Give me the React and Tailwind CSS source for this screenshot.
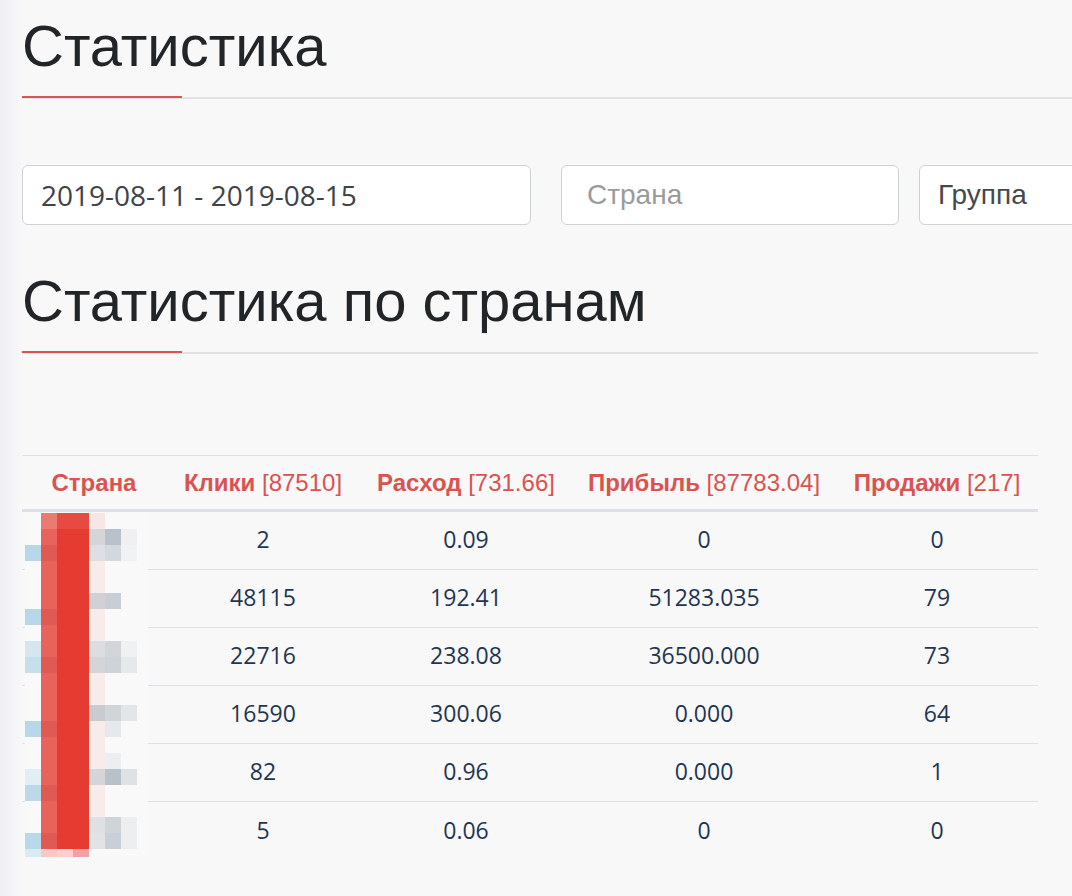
import React from 'react';

const headFont = { fontFamily: '"Liberation Sans", Arial, sans-serif' };

const columns = [
  { name: 'Страна', total: null },
  { name: 'Клики', total: '87510' },
  { name: 'Расход', total: '731.66' },
  { name: 'Прибыль', total: '87783.04' },
  { name: 'Продажи', total: '217' },
];

const rows = [
  ['2', '0.09', '0', '0'],
  ['48115', '192.41', '51283.035', '79'],
  ['22716', '238.08', '36500.000', '73'],
  ['16590', '300.06', '0.000', '64'],
  ['82', '0.96', '0.000', '1'],
  ['5', '0.06', '0', '0'],
];

// pixelated (redacted) country column, 16px blocks
const W = '#f9f9fa';
const P = '#f8eceb';
const R1 = '#e8635b';
const R2 = '#e53b30';
const mosaic = [
  [W, '#ea7a72', '#e64a40', '#e64a40', '#f8e6e5', W, W, W],
  [W, R1, R2, R2, '#d3d5d9', '#b9c1ca', '#eef0f2', W],
  ['#b7d8ea', '#e05a52', R2, R2, '#dedfe2', '#d3d8dd', '#f1f2f4', W],
  [W, R1, R2, R2, P, W, W, W],
  [W, R1, R2, R2, P, W, W, W],
  [W, R1, R2, R2, '#cfd1d6', '#c8ced5', W, W],
  ['#b7d8ea', '#e05a52', R2, R2, P, W, W, W],
  [W, R1, R2, R2, P, W, W, W],
  ['#d5e6ee', R1, R2, R2, '#dcdde1', '#d2d6db', '#f0f1f3', W],
  ['#c6dfec', '#e05a52', R2, R2, '#d3d5d9', '#cdd3d9', '#e6e9ec', W],
  [W, R1, R2, R2, P, W, W, W],
  [W, R1, R2, R2, P, W, W, W],
  [W, R1, R2, R2, '#c9cbd0', '#d0d5da', '#e3e6e9', W],
  ['#b7d8ea', '#e05a52', R2, R2, P, '#e6e9ec', W, W],
  [W, R1, R2, R2, P, W, W, W],
  [W, R1, R2, R2, P, '#eceef0', W, W],
  ['#e1eef4', R1, R2, R2, '#d3d5d9', '#b8c0c8', '#dfe2e5', W],
  ['#bcd9e9', '#e05a52', R2, R2, P, W, W, W],
  [W, R1, R2, R2, P, W, W, W],
  [W, R1, R2, R2, '#dfe0e3', '#cfd4d9', '#eceef0', W],
  ['#b8d9ea', '#e05a52', R2, R2, '#e2e3e6', '#c8cfd6', '#eceef0', W],
  ['#daeaf2', '#f6c9c6', '#f7cfcc', '#f0a3a5', W, W, W, W],
];

const Heading = ({ children, wide }) => (
  <div className={wide ? 'w-[1100px]' : 'w-[1016px]'}>
    <h1 className="text-[58px] leading-[67px] text-[#222528]" style={headFont}>
      {children}
    </h1>
    <div className="relative mt-[18px] h-[2px] bg-[#e2e2e4]">
      <div className="absolute left-0 top-[-1px] h-[2px] w-[160px] bg-[#d9534f]" />
    </div>
  </div>
);

const Mosaic = () => (
  <div className="absolute left-[3px] top-[57px] h-[344px] w-[123px] overflow-hidden">
    {mosaic.map((line, i) => (
      <div key={i} className="flex h-[16px]">
        {line.map((c, j) => (
          <div key={j} className="h-[16px] w-[16px] shrink-0" style={{ background: c }} />
        ))}
      </div>
    ))}
  </div>
);

export default function App() {
  return (
    <div className="min-h-screen w-full overflow-hidden bg-[#f8f8f9] bg-[linear-gradient(to_right,#efeff4,#f8f8f9_22px)]">
      <div className="pl-[22px] pt-[12px]">
        <Heading wide>Статистика</Heading>

        <div className="mt-[66px] flex w-[1200px]">
          <div
            className="flex h-[60px] w-[509px] shrink-0 items-center rounded-[6px] border border-[#ced1d5] bg-white pl-[18px] text-[28px] text-[#3d4348]"
            style={{ fontFamily: '"Open Sans", sans-serif' }}
          >
            2019-08-11 - 2019-08-15
          </div>
          <div
            className="ml-[30px] flex h-[60px] w-[338px] shrink-0 items-center rounded-[6px] border border-[#ced1d5] bg-white pl-[25px] text-[28px] text-[#9a9b9d]"
            style={headFont}
          >
            Страна
          </div>
          <div
            className="ml-[20px] flex h-[60px] w-[300px] shrink-0 items-center rounded-[6px] border border-[#ced1d5] bg-white pl-[18px] text-[28px] text-[#45494e]"
            style={headFont}
          >
            Группа
          </div>
        </div>

        <div className="mt-[42px]">
          <Heading>Статистика по странам</Heading>
        </div>

        <div className="relative mt-[101px] w-[1016px] border-t border-[#dee2e6]">
          <div
            className="grid h-[56px] grid-cols-[144px_194px_212px_264px_202px] items-center border-b-[3px] border-[#dde1e7] text-center text-[24px] text-[#d9534f]"
            style={headFont}
          >
            {columns.map((c) => (
              <div key={c.name} className="whitespace-nowrap">
                <span className="font-bold">{c.name}</span>
                {c.total && <span> [{c.total}]</span>}
              </div>
            ))}
          </div>
          {rows.map((r, i) => (
            <div
              key={i}
              className={`grid h-[58px] grid-cols-[144px_194px_212px_264px_202px] items-center pb-[2px] text-center text-[23px] text-[#1f3652] ${
                i < rows.length - 1 ? 'border-b border-[#dee2e6]' : ''
              }`}
              style={{ fontFamily: '"Open Sans", sans-serif' }}
            >
              <div />
              {r.map((v, j) => (
                <div key={j}>{v}</div>
              ))}
            </div>
          ))}
          <Mosaic />
        </div>
      </div>
    </div>
  );
}
